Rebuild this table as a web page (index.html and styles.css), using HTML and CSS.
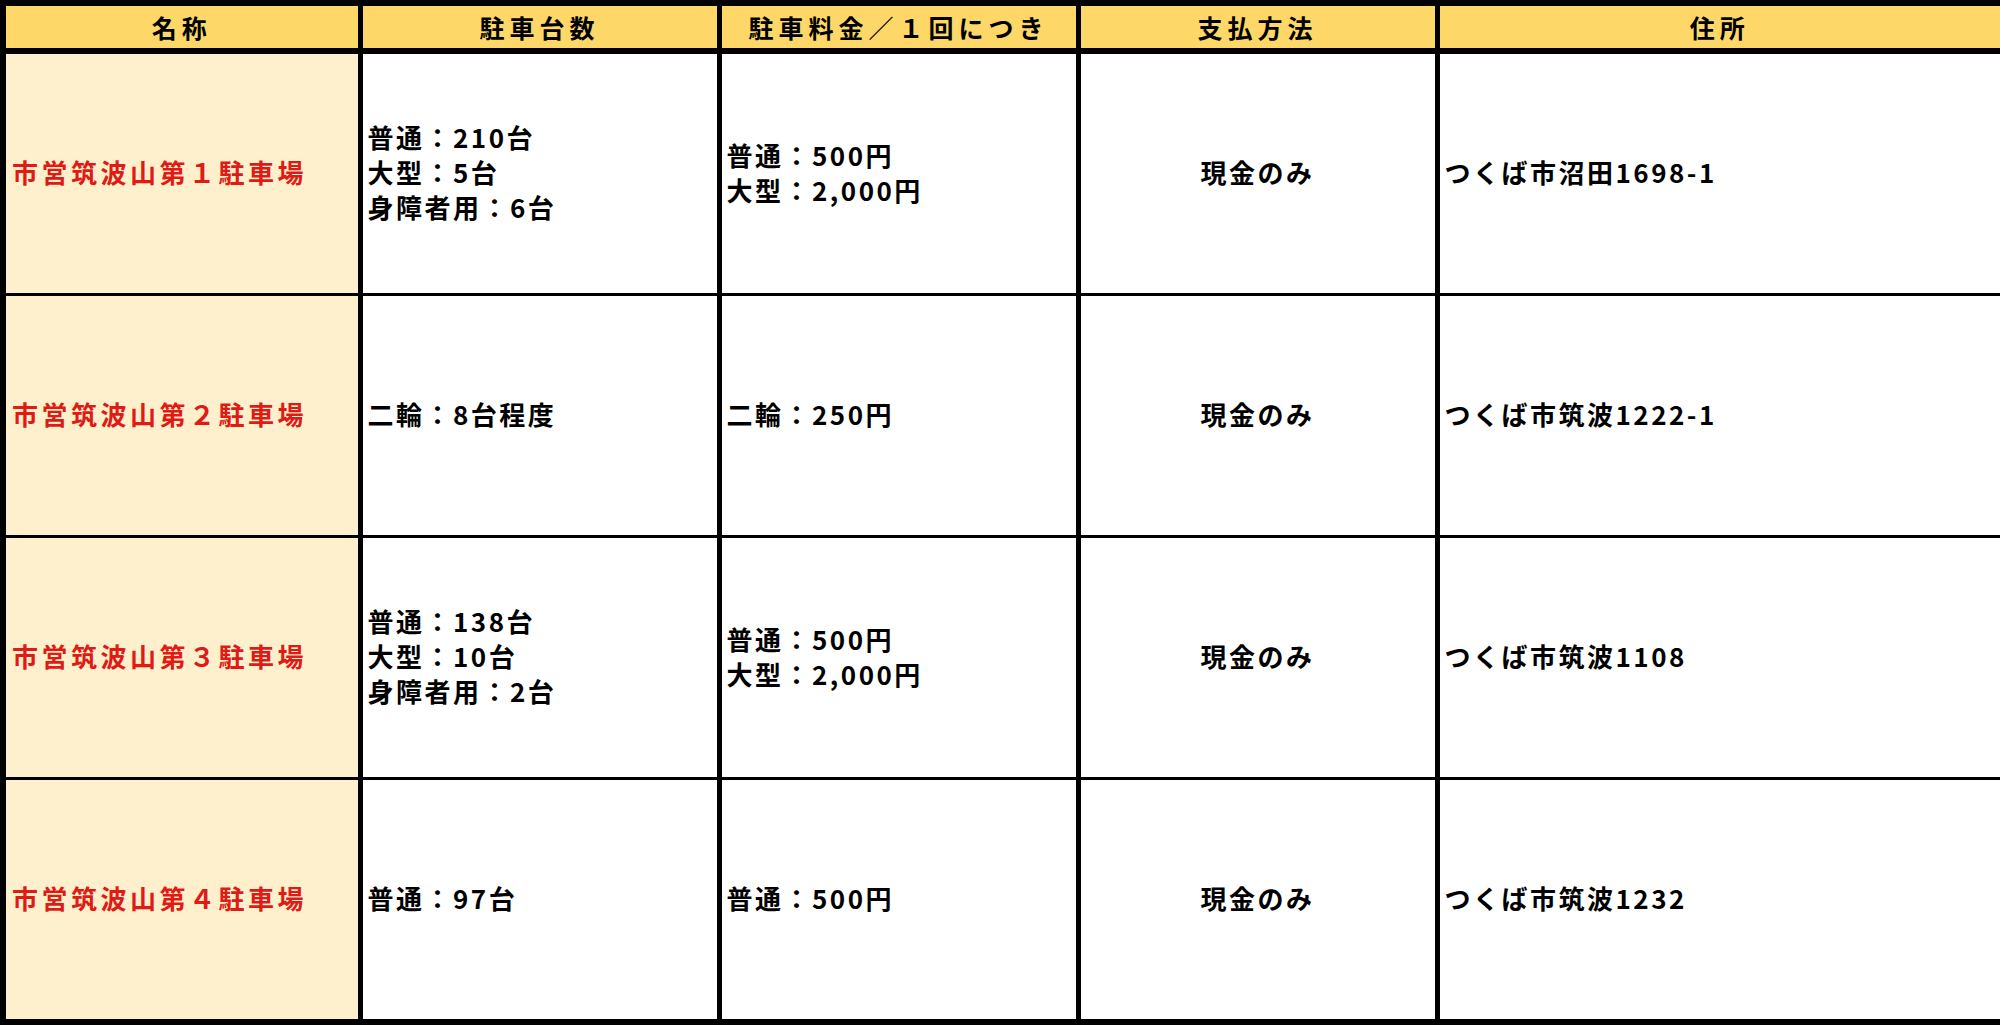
FILE: index.html
```html
<!DOCTYPE html>
<html lang="ja">
<head>
<meta charset="utf-8">
<title>市営筑波山駐車場</title>
<link rel="stylesheet" href="styles.css">
</head>
<body>
<table class="parking">
  <colgroup>
    <col class="c-name">
    <col class="c-count">
    <col class="c-fee">
    <col class="c-pay">
    <col class="c-addr">
  </colgroup>
  <thead>
    <tr class="head-row">
      <th>名称</th>
      <th>駐車台数</th>
      <th>駐車料金／１回につき</th>
      <th>支払方法</th>
      <th>住所</th>
    </tr>
  </thead>
  <tbody>
    <tr class="data-row">
      <td class="name">市営筑波山第１駐車場</td>
      <td class="left">普通：210台<br>大型：5台<br>身障者用：6台</td>
      <td class="left">普通：500円<br>大型：2,000円</td>
      <td class="center">現金のみ</td>
      <td class="left">つくば市沼田1698-1</td>
    </tr>
    <tr class="data-row">
      <td class="name">市営筑波山第２駐車場</td>
      <td class="left">二輪：8台程度</td>
      <td class="left">二輪：250円</td>
      <td class="center">現金のみ</td>
      <td class="left">つくば市筑波1222-1</td>
    </tr>
    <tr class="data-row">
      <td class="name">市営筑波山第３駐車場</td>
      <td class="left">普通：138台<br>大型：10台<br>身障者用：2台</td>
      <td class="left">普通：500円<br>大型：2,000円</td>
      <td class="center">現金のみ</td>
      <td class="left">つくば市筑波1108</td>
    </tr>
    <tr class="data-row">
      <td class="name">市営筑波山第４駐車場</td>
      <td class="left">普通：97台</td>
      <td class="left">普通：500円</td>
      <td class="center">現金のみ</td>
      <td class="left">つくば市筑波1232</td>
    </tr>
  </tbody>
</table>
</body>
</html>
```
FILE: styles.css
```css
html, body {
  margin: 0;
  padding: 0;
  background: #ffffff;
}

body {
  font-family: "Noto Sans CJK JP", "Noto Sans", sans-serif;
  color: #000;
}

.parking {
  border-collapse: collapse;
  table-layout: fixed;
  width: 2000px;
  border: 6px solid #000;
}

.c-name  { width: 357px; }
.c-count { width: 359px; }
.c-fee   { width: 359px; }
.c-pay   { width: 359px; }
.c-addr  { width: 566px; }

.head-row th {
  height: 42px;
  padding: 0;
  background: #fdd868;
  border-left: 5px solid #000;
  border-right: 5px solid #000;
  border-bottom: 6px solid #000;
  font-size: 25px;
  font-weight: 700;
  letter-spacing: 5px;
  line-height: 1;
  text-align: center;
  vertical-align: middle;
}

.data-row td {
  height: 235px;
  padding: 0 0 4px 5px;
  border-left: 5px solid #000;
  border-right: 5px solid #000;
  border-top: 3px solid #000;
  border-bottom: 3px solid #000;
  font-size: 26px;
  font-weight: 700;
  letter-spacing: 2.5px;
  line-height: 35px;
  vertical-align: middle;
  background: #fff;
  white-space: nowrap;
}

.data-row td.name {
  background: #fff0cd;
  color: #e01a14;
  font-size: 26px;
  letter-spacing: 3.5px;
  padding-left: 6px;
}

.data-row td.center {
  text-align: center;
  padding-left: 0;
}

.data-row td.left {
  text-align: left;
}
```
